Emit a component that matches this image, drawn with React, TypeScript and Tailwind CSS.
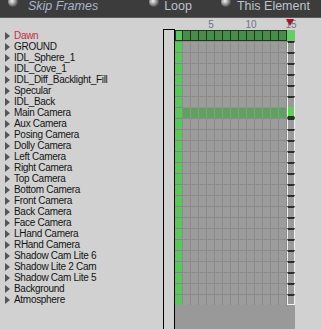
const rows = [
  "Dawn",
  "GROUND",
  "IDL_Sphere_1",
  "IDL_Cove_1",
  "IDL_Diff_Backlight_Fill",
  "Specular",
  "IDL_Back",
  "Main Camera",
  "Aux Camera",
  "Posing Camera",
  "Dolly Camera",
  "Left Camera",
  "Right Camera",
  "Top Camera",
  "Bottom Camera",
  "Front Camera",
  "Back Camera",
  "Face Camera",
  "LHand Camera",
  "RHand Camera",
  "Shadow Cam Lite 6",
  "Shadow Lite 2 Cam",
  "Shadow Cam Lite 5",
  "Background",
  "Atmosphere",
];

const frames = Array.from({ length: 14 }, (_, i) => i + 1);

function Dot() {
  return (
    <span className="-mt-[3px] block h-[10px] w-[10px] shrink-0 rounded-full bg-[radial-gradient(circle_at_40%_40%,#f4f4f4_0%,#b0b0b0_30%,#5a5a5a_65%,#1c1c1c_100%)]" />
  );
}

function GridRow({ index }: { index: number }) {
  const last = index === rows.length - 1;

  if (index === 0) {
    return (
      <div className="flex h-[11px]">
        {frames.map((f) => (
          <div
            key={f}
            className={
              f === 1
                ? "h-full w-[8px] border border-[#1d3a1d] bg-[#5cc45c]"
                : "h-full w-[8px] border-y border-r border-[#1d3a1d] bg-[#4a8a4a]"
            }
          />
        ))}
        <div className="h-full w-[8px] bg-[#66cc66]" />
      </div>
    );
  }

  const active = rows[index] === "Main Camera";

  return (
    <div className="flex h-[11px]">
      {frames.map((f) =>
        f === 1 ? (
          <div
            key={f}
            className="h-full w-[8px] border-t border-r border-t-[#8d7f92] border-r-[#8c8c8c] bg-[#58c858]"
          />
        ) : active ? (
          <div
            key={f}
            className="h-full w-[8px] border-t border-r border-[#7da27d] bg-[#62a062]"
          />
        ) : (
          <div
            key={f}
            className="h-full w-[8px] border-t border-r border-[#8b8b8b] bg-[#9c9c9c]"
          />
        )
      )}
      <div
        className={
          active
            ? "h-full w-[8px] border-x border-b-2 border-x-[#f2f2f2] border-b-[#1a3a1a] bg-[#5cd05c]"
            : `h-full w-[8px] border-x border-t-2 border-x-[#f2f2f2] border-t-[#2c2c2c] bg-[#9a9a9a] ${
                last ? "border-b border-b-[#f2f2f2]" : ""
              }`
        }
      />
    </div>
  );
}

export default function App() {
  return (
    <div className="flex h-[329px] w-[321px] flex-col overflow-hidden bg-[#d1d1d1] font-['Liberation_Sans',Arial,sans-serif]">
      {/* top bar with the radio options */}
      <div className="flex h-[18px] shrink-0 items-start border-b border-[#5a5a5a] bg-[#3c3c3c] text-[12.5px] leading-[14px]">
        <span className="ml-[8px]">
          <Dot />
        </span>
        <span className="-mt-[1px] ml-[10px] italic text-[#aab4cc]">Skip Frames</span>
        <span className="ml-[51px]">
          <Dot />
        </span>
        <span className="-mt-[1px] ml-[5px] text-[#bcc2cc]">Loop</span>
        <span className="ml-[29px]">
          <Dot />
        </span>
        <span className="-mt-[1px] ml-[6px] text-[#bcc2cc]">This Element</span>
      </div>

      <div className="flex flex-1">
        {/* element list */}
        <div className="w-[163px] shrink-0 pt-[12px]">
          {rows.map((name, i) => (
            <div key={name} className="flex h-[11px] items-center pl-[5px]">
              <span className="h-0 w-0 border-y-[4px] border-l-[5px] border-y-transparent border-l-[#555555]" />
              <span
                className={`ml-[4px] whitespace-nowrap text-[10px] leading-[11px] tracking-[-0.3px] ${
                  i === 0 ? "text-[#c03040]" : "text-[#141414]"
                }`}
              >
                {name}
              </span>
            </div>
          ))}
        </div>

        {/* key column */}
        <div className="mt-[11px] w-[12px] shrink-0 border-x border-t border-black bg-[#d1d1d1]" />

        {/* frame grid */}
        <div className="flex w-[120px] shrink-0 flex-col">
          <div className="relative flex h-[12px] text-[10px] leading-[12px] text-[#6b7589]">
            {Array.from({ length: 15 }, (_, i) => i + 1).map((n) => (
              <div key={n} className="flex w-[8px] justify-center pt-[1px]">
                {n % 5 === 0 ? n : ""}
              </div>
            ))}
            <span className="absolute left-[111px] top-[1px] h-0 w-0 border-x-[4.5px] border-t-[7px] border-x-transparent border-t-[#b0102a]" />
          </div>
          {rows.map((name, i) => (
            <GridRow key={name} index={i} />
          ))}
          <div className="flex-1 bg-[#999999]" />
        </div>

        <div className="flex-1" />
      </div>
    </div>
  );
}
